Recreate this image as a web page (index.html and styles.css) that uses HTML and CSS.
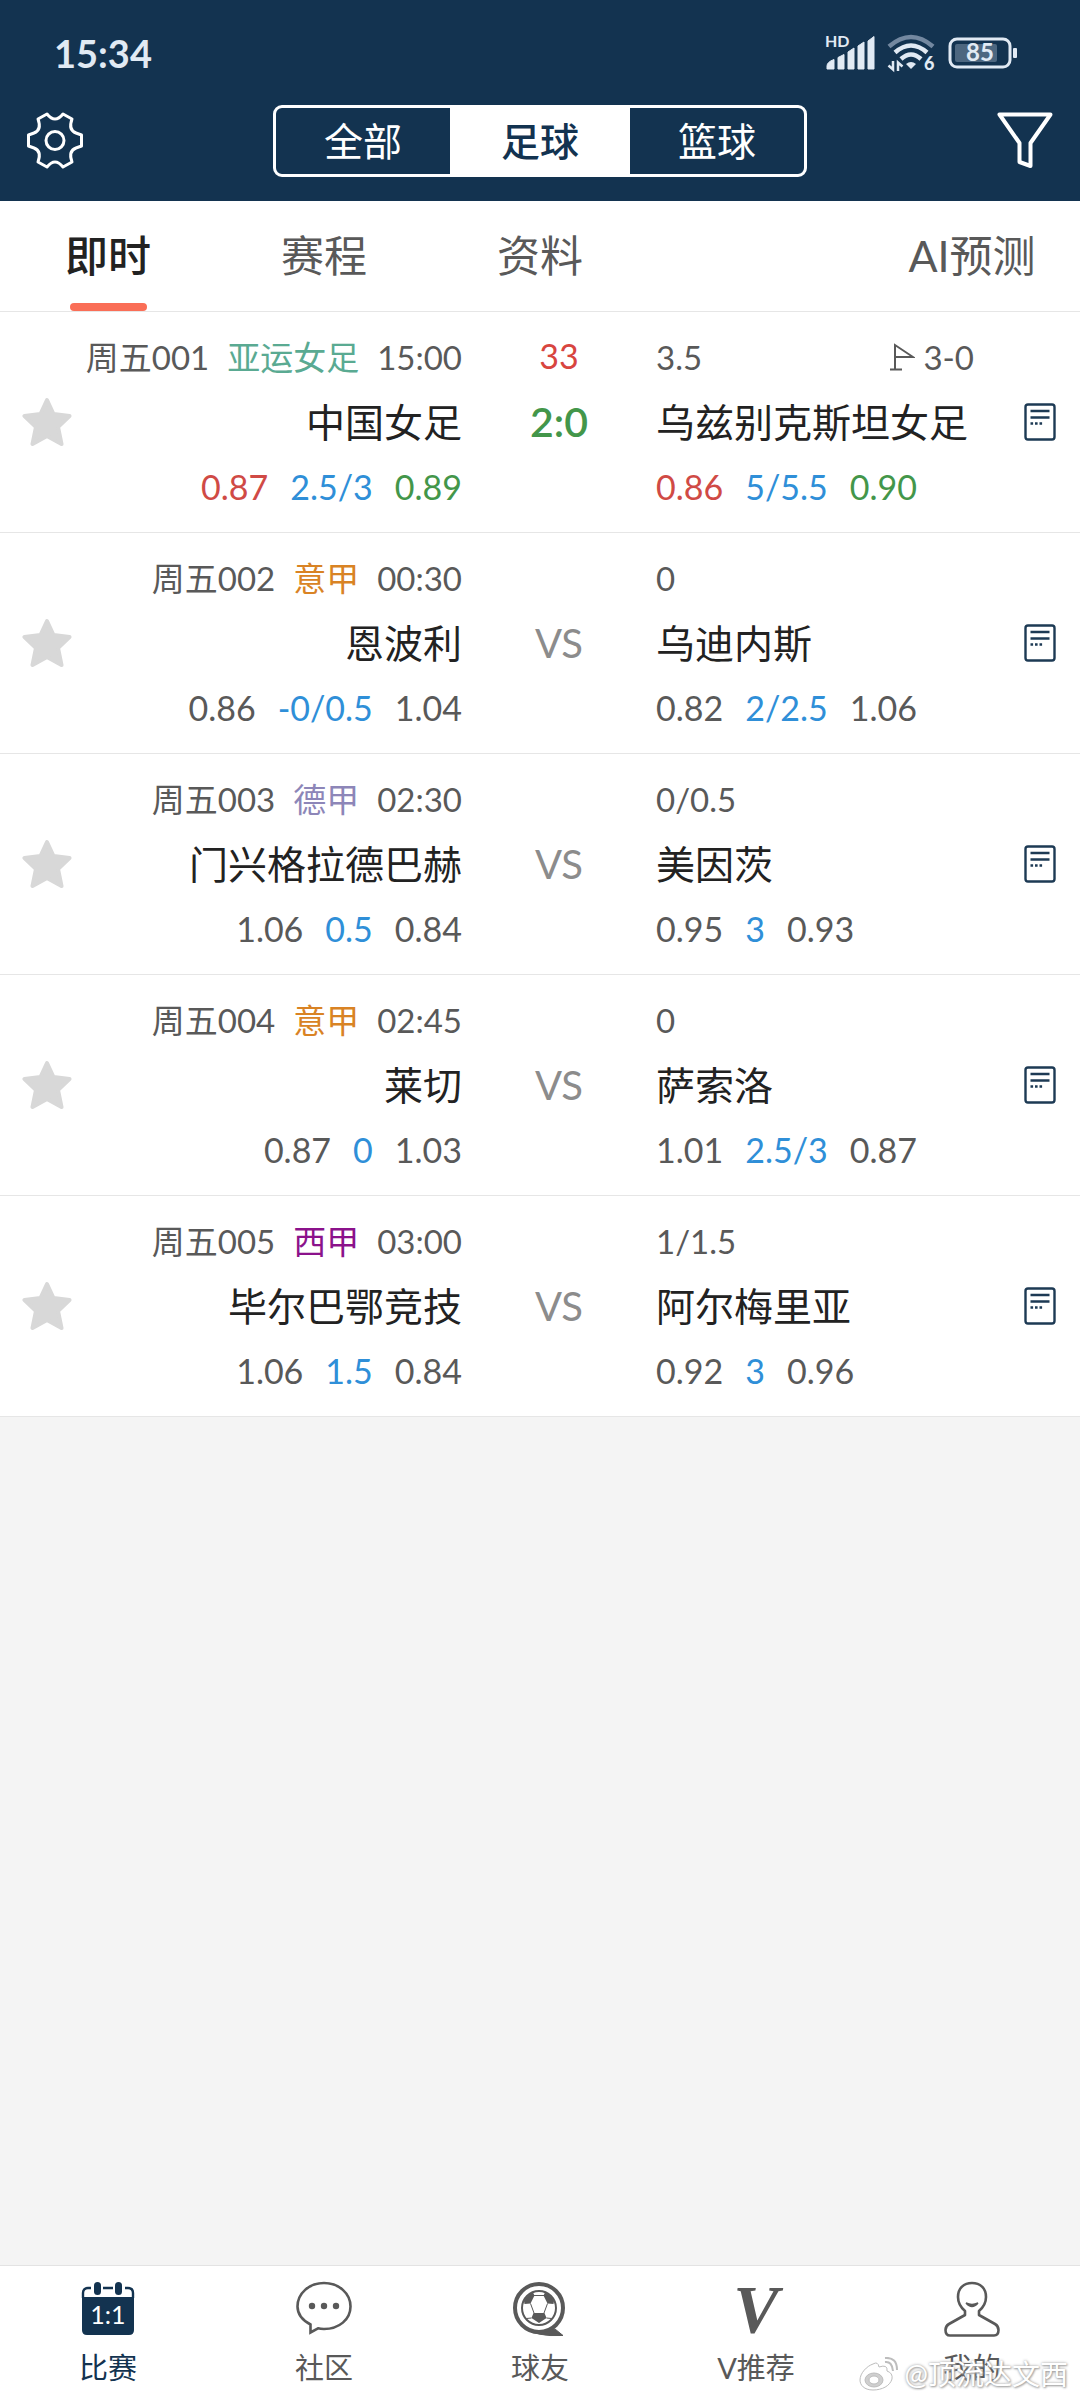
FILE: index.html
```html
<!DOCTYPE html>
<html lang="zh-CN">
<head>
  <meta charset="UTF-8">
  <meta name="viewport" content="width=device-width, initial-scale=1">
  <title>足球比分</title>
  <link rel="stylesheet" href="styles.css">
</head>
<body>
  <!-- shared icons -->
  <svg class="sprite" aria-hidden="true">
    <symbol id="star" viewBox="0 0 50 50">
      <path d="M25 3l6.500 14 16 2-11.500 11 3.500 17-14.500-8-14.500 8 3.500-17-11.500-11 16-2z" fill="#d8d8d8" stroke="#d8d8d8" stroke-width="4" stroke-linejoin="round"/>
    </symbol>
    <symbol id="note" viewBox="0 0 32 38">
      <rect x="1.500" y="1.500" width="29" height="35" rx="2.500" fill="none" stroke="#1d3a54" stroke-width="2.400"/>
      <path d="M6.500 8h19M6.500 14.500h19" stroke="#1d3a54" stroke-width="2.400"/>
      <path d="M6.500 20.500h2.600M11 20.500h2.600M15.500 20.500h2.600" stroke="#1d3a54" stroke-width="2.600"/>
    </symbol>
  </svg>

  <header class="header">
    <div class="status">
      <span class="clock">15:34</span>
      <div class="status-icons">
        <svg width="52" height="48" viewBox="0 -6 52 48" fill="#e1eaf4">
          <text x="1" y="12" class="hd">HD</text>
          <path d="M3 34v-3q0-4 7-6.500v9.500zM14 22.500l6-3v14.500h-6zM24 17l6-4v21h-6zM34 11l6-4v27h-6zM44 6l6-4.500v32.500h-6z" stroke="#e1eaf4" stroke-width="1" stroke-linejoin="round"/>
        </svg>
        <svg class="wifi" width="50" height="50" viewBox="0 -6 50 50" fill="none" stroke-width="4.500">
          <path d="M2 12.500Q24-6.500 46 12.500" stroke="#7388a0"/>
          <path d="M8 18.500Q24 4.500 40 18.500M14 25Q24 16 34 25" stroke="#e1eaf4"/>
          <path d="M24 35l-5-5q5-4 10 0z" fill="#e1eaf4"/>
          <path d="M6 27v8.500l-4.500-4M11 37v-8.500l4.500 4" stroke="#e1eaf4" stroke-width="2.500"/>
          <text x="37" y="36" class="six">6</text>
        </svg>
        <svg width="70" height="32" viewBox="0 0 70 32">
          <rect x="2" y="2" width="60" height="28" rx="7" fill="none" stroke="#e1eaf4" stroke-width="3"/>
          <rect x="7" y="7" width="42" height="18" rx="2" fill="#4d6780"/>
          <rect x="65" y="11" width="4" height="10" rx="1" fill="#e1eaf4"/>
          <text x="32" y="24" class="percent">85</text>
        </svg>
      </div>
    </div>
    <div class="toolbar">
      <button class="icon-btn" aria-label="设置">
        <svg width="56" height="58" viewBox="0 0 56 58" fill="none" stroke="#fff" stroke-width="3" stroke-linejoin="round">
          <path d="M20 2Q24 7 28 7T36 2L45 7Q41 18 49 21L54.500 23V34L49 36Q41 39 45 50L36 55Q32 50 28 50T20 55L11 50Q15 39 7 36L1.500 34V23L7 21Q15 18 11 7Z"/>
          <circle cx="28" cy="28.500" r="9"/>
        </svg>
      </button>
      <div class="segment">
        <button>全部</button>
        <button class="active">足球</button>
        <button>篮球</button>
      </div>
      <button class="icon-btn" aria-label="筛选">
        <svg width="56" height="58" viewBox="0 0 56 58" fill="none" stroke="#fff" stroke-width="4" stroke-linejoin="round">
          <path d="M2.500 2.500H53.500L33.500 31V54L22.500 50V31Z"/>
        </svg>
      </button>
    </div>
  </header>

  <nav class="tabs">
    <a href="#" class="active">即时</a>
    <a href="#">赛程</a>
    <a href="#">资料</a>
    <a href="#" class="last">AI预测</a>
  </nav>

  <main class="matches">
    <article class="match">
      <button class="star" aria-label="收藏"><svg width="50" height="50"><use href="#star"/></svg></button>
      <div class="side home">
        <div class="meta"><span>周五001</span><span class="yayun">亚运女足</span><span>15:00</span></div>
        <div class="team">中国女足</div>
        <div class="odds"><span class="up">0.87</span><span class="line">2.5/3</span><span class="down">0.89</span></div>
      </div>
      <div class="middle">
        <div class="minute">33</div>
        <div class="score">2:0</div>
      </div>
      <div class="side away">
        <div class="meta">
          <span>3.5</span>
          <span class="corner">
            <svg width="25" height="28" viewBox="0 0 25 28" fill="none" stroke="#595959" stroke-width="2"><path d="M0 26.500H12M5 26V2L23 14H5"/></svg>
            3-0
          </span>
        </div>
        <div class="team">乌兹别克斯坦女足</div>
        <div class="odds"><span class="up">0.86</span><span class="line">5/5.5</span><span class="down">0.90</span></div>
      </div>
      <button class="note" aria-label="分析"><svg width="32" height="38"><use href="#note"/></svg></button>
    </article>

    <article class="match">
      <button class="star" aria-label="收藏"><svg width="50" height="50"><use href="#star"/></svg></button>
      <div class="side home">
        <div class="meta"><span>周五002</span><span class="yijia">意甲</span><span>00:30</span></div>
        <div class="team">恩波利</div>
        <div class="odds"><span>0.86</span><span class="line">-0/0.5</span><span>1.04</span></div>
      </div>
      <div class="middle"><div class="vs">VS</div></div>
      <div class="side away">
        <div class="meta"><span>0</span></div>
        <div class="team">乌迪内斯</div>
        <div class="odds"><span>0.82</span><span class="line">2/2.5</span><span>1.06</span></div>
      </div>
      <button class="note" aria-label="分析"><svg width="32" height="38"><use href="#note"/></svg></button>
    </article>

    <article class="match">
      <button class="star" aria-label="收藏"><svg width="50" height="50"><use href="#star"/></svg></button>
      <div class="side home">
        <div class="meta"><span>周五003</span><span class="dejia">德甲</span><span>02:30</span></div>
        <div class="team">门兴格拉德巴赫</div>
        <div class="odds"><span>1.06</span><span class="line">0.5</span><span>0.84</span></div>
      </div>
      <div class="middle"><div class="vs">VS</div></div>
      <div class="side away">
        <div class="meta"><span>0/0.5</span></div>
        <div class="team">美因茨</div>
        <div class="odds"><span>0.95</span><span class="line">3</span><span>0.93</span></div>
      </div>
      <button class="note" aria-label="分析"><svg width="32" height="38"><use href="#note"/></svg></button>
    </article>

    <article class="match">
      <button class="star" aria-label="收藏"><svg width="50" height="50"><use href="#star"/></svg></button>
      <div class="side home">
        <div class="meta"><span>周五004</span><span class="yijia">意甲</span><span>02:45</span></div>
        <div class="team">莱切</div>
        <div class="odds"><span>0.87</span><span class="line">0</span><span>1.03</span></div>
      </div>
      <div class="middle"><div class="vs">VS</div></div>
      <div class="side away">
        <div class="meta"><span>0</span></div>
        <div class="team">萨索洛</div>
        <div class="odds"><span>1.01</span><span class="line">2.5/3</span><span>0.87</span></div>
      </div>
      <button class="note" aria-label="分析"><svg width="32" height="38"><use href="#note"/></svg></button>
    </article>

    <article class="match">
      <button class="star" aria-label="收藏"><svg width="50" height="50"><use href="#star"/></svg></button>
      <div class="side home">
        <div class="meta"><span>周五005</span><span class="xijia">西甲</span><span>03:00</span></div>
        <div class="team">毕尔巴鄂竞技</div>
        <div class="odds"><span>1.06</span><span class="line">1.5</span><span>0.84</span></div>
      </div>
      <div class="middle"><div class="vs">VS</div></div>
      <div class="side away">
        <div class="meta"><span>1/1.5</span></div>
        <div class="team">阿尔梅里亚</div>
        <div class="odds"><span>0.92</span><span class="line">3</span><span>0.96</span></div>
      </div>
      <button class="note" aria-label="分析"><svg width="32" height="38"><use href="#note"/></svg></button>
    </article>
  </main>

  <nav class="bottom">
    <a href="#" class="active">
      <svg width="56" height="56" viewBox="0 0 56 56">
        <path d="M2 16h52v33q0 5-5 5H7q-5 0-5-5z" fill="#133350"/>
        <path d="M3 17v-5q0-5 5-5h3M23 7h10M45 7h3q5 0 5 5v5" fill="none" stroke="#133350" stroke-width="2.400"/>
        <rect x="14" y="1" width="7" height="13" rx="3.500" fill="#133350"/>
        <rect x="35" y="1" width="7" height="13" rx="3.500" fill="#133350"/>
        <text x="28" y="43" class="cal">1:1</text>
      </svg>
      <span>比赛</span>
    </a>
    <a href="#">
      <svg width="56" height="56" viewBox="0 0 56 56" fill="none" stroke="#595959" stroke-width="2.600">
        <path d="M14.500 51.500V43.500C6 39 1.500 32.500 1.500 25.500 1.500 12.500 13 2 28 2S54.500 12.500 54.500 25.500 43 48 28 48Q24.500 48 22 47.300Z"/>
        <g fill="#595959" stroke="none"><circle cx="16" cy="25" r="3.200"/><circle cx="28" cy="25" r="3.200"/><circle cx="40" cy="25" r="3.200"/></g>
      </svg>
      <span>社区</span>
    </a>
    <a href="#">
      <svg width="56" height="56" viewBox="0 0 56 56" fill="none" stroke="#595959">
        <circle cx="27" cy="27" r="24" stroke-width="4"/>
        <path d="M11 46Q23 56 51 54.500L43 48Q30 55 11 46z" fill="#595959"/>
        <circle cx="27" cy="27" r="17" stroke-width="2"/>
        <path d="M21.500 32h11l2 5-7.500 5-7.500-5zM12 20q3-6 9-8.500l1.500 3-4 8-6 .5zM42 20q-3-6-9-8.500l-1.500 3 4 8 6 .5z" fill="#595959" stroke="none"/>
        <path d="M22 14.500h10M18.500 22.500l3.500 9.500M35.500 22.500L32 32M19.500 37l-5 .5M34.500 37l5 .5"/>
      </svg>
      <span>球友</span>
    </a>
    <a href="#">
      <b class="big-v">V</b>
      <span>V推荐</span>
    </a>
    <a href="#">
      <svg width="56" height="56" viewBox="0 0 56 56" fill="none" stroke="#595959" stroke-width="2.600">
        <path d="M21 34V30Q14 24 14 16C14 7 20 2 28 2S42 7 42 16Q42 24 35 30V34L51 43Q54.500 45 54.500 49 54.500 54.500 50 54.500H6Q1.500 54.500 1.500 49 1.500 45 5 43Z" stroke-linejoin="round"/>
        <path d="M22 22Q28 29 34 22Q28 25 22 22z" fill="#595959" stroke-width="1.400"/>
      </svg>
      <span>我的</span>
    </a>
    <div class="watermark">
      <svg width="40" height="34" viewBox="0 0 40 34" fill="#fff" stroke="#bdbdbd" stroke-width="1">
        <path d="M14 7Q19 4 20 10Q29 7 28 14Q34 16 33 22C31 29 23 33 14 33 5 33 1 28 1 23 1 16 8 9 14 7z"/>
        <ellipse cx="15" cy="23" rx="9" ry="7" fill="#cfcfcf"/>
        <ellipse cx="15" cy="23" rx="5" ry="4"/>
        <path d="M26 5Q33 4 34 14M26 1Q38 0 38 13" fill="none" stroke-width="2"/>
      </svg>
      <span>@顶流达文西</span>
    </div>
  </nav>
</body>
</html>
```
FILE: styles.css
```css
* {
  box-sizing: border-box;
}
body {
  margin: 0;
  min-height: 100vh;
  display: flex;
  flex-direction: column;
  font-family: Lato, "Noto Sans CJK SC", sans-serif;
  background: #f4f4f4;
  color: #595959;
}
button {
  padding: 0;
  border: none;
  background: none;
  font: inherit;
  color: inherit;
}
a {
  color: inherit;
  text-decoration: none;
}
svg {
  display: block;
}
.sprite {
  position: absolute;
  width: 0;
  height: 0;
}

/* header */
.header {
  background: #133350;
  color: #fff;
  padding-bottom: 24px;
}
.status {
  display: flex;
  justify-content: space-between;
  align-items: center;
  height: 105px;
  padding: 0 62px 0 54px;
}
.clock {
  font-size: 38px;
  font-weight: 700;
  color: #e1eaf4;
}
.status-icons {
  display: flex;
  align-items: center;
  gap: 11px;
}
.hd {
  font-size: 16px;
  font-weight: 700;
}
.wifi text {
  fill: #e1eaf4;
  stroke: none;
}
.six {
  font-size: 18px;
  font-weight: 900;
}
.percent {
  font-size: 24px;
  font-weight: 700;
  text-anchor: middle;
  fill: #e1eaf4;
}
.toolbar {
  display: flex;
  justify-content: space-between;
  align-items: center;
  padding: 0 27px;
}
.segment {
  display: flex;
  width: 534px;
  height: 72px;
  border: 3px solid #fff;
  border-radius: 9px;
  overflow: hidden;
}
.segment button {
  flex: 1;
  padding-bottom: 4px;
  font-size: 39px;
}
.segment .active {
  flex: 0 0 180px;
  background: #fff;
  color: #133350;
  font-weight: 500;
}

/* tabs */
.tabs {
  display: grid;
  grid-template-columns: repeat(5, 1fr);
  height: 111px;
  background: #fff;
  border-bottom: 1px solid #e6e6e6;
  font-size: 43px;
}
.tabs a {
  display: flex;
  flex-direction: column;
  align-items: center;
  line-height: 110px;
}
.tabs .last {
  grid-column: 5;
}
.tabs .active {
  color: #222;
  font-weight: 500;
}
.tabs .active::after {
  content: "";
  width: 77px;
  height: 8px;
  margin-top: -8px;
  border-radius: 4px;
  background: #fa6e57;
}

/* match list */
.matches {
  flex: 1;
}
.match {
  display: grid;
  grid-template-columns: 94px 368fr 194px 318fr 106px;
  align-items: center;
  height: 221px;
  background: #fff;
  border-bottom: 1px solid #e6e6e6;
  line-height: 66px;
  white-space: nowrap;
}
.side {
  min-width: 0;
}
.star,
.note {
  display: flex;
  justify-content: center;
}
.note {
  padding-left: 26px;
}
.meta,
.odds {
  display: flex;
  font-size: 34px;
}
.meta {
  gap: 18px;
  font-size: 33px;
}
.odds {
  gap: 22px;
}
.team {
  font-size: 39px;
  line-height: 64px;
  color: #222;
}
.home .meta,
.home .odds {
  justify-content: flex-end;
}
.home .team {
  text-align: right;
}
.away .meta {
  justify-content: space-between;
}
.corner {
  display: flex;
  align-items: center;
  gap: 8px;
}
.middle {
  text-align: center;
}
.minute {
  font-size: 34px;
  color: #d8453f;
}
.score {
  margin-bottom: 66px;
  font-size: 41px;
  font-weight: 600;
  color: #43964a;
}
.vs {
  font-size: 40px;
  color: #8c8c8c;
}
.up { color: #d04a45; }
.down { color: #43964a; }
.line { color: #2f8fd8; }
.yayun { color: #5aaa92; }
.yijia { color: #d98324; }
.dejia { color: #8d86b8; }
.xijia { color: #8b128b; }

/* bottom bar */
.bottom {
  position: relative;
  display: grid;
  grid-template-columns: repeat(5, 1fr);
  height: 135px;
  padding-top: 15px;
  background: #fff;
  border-top: 1px solid #e3e3e3;
  font-size: 29px;
}
.bottom a {
  display: flex;
  flex-direction: column;
  align-items: center;
  gap: 10px;
  line-height: 42px;
}
.bottom .active {
  color: #133350;
}
.cal {
  font-size: 25px;
  text-anchor: middle;
  fill: #fff;
}
.bottom .big-v {
  height: 56px;
  font-family: "Liberation Serif", serif;
  font-size: 68px;
  line-height: 56px;
  font-style: italic;
}
.watermark {
  position: absolute;
  right: 12px;
  bottom: 6px;
  display: flex;
  align-items: center;
  gap: 6px;
  font-size: 28px;
  line-height: 40px;
  color: #fff;
  text-shadow: 0 0 3px #999, 1px 1px 2px #aaa;
}
```
